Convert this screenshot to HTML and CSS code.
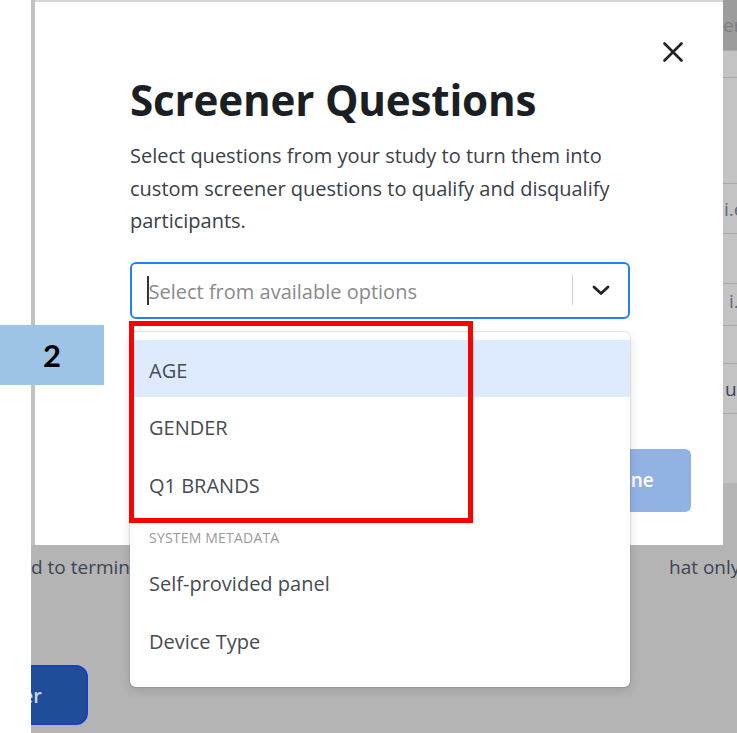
FILE: index.html
```html
<!DOCTYPE html>
<html lang="en">
<head>
<meta charset="utf-8">
<title>Screener Questions</title>
<link rel="stylesheet" href="styles.css">
</head>
<body>
<div class="stage">
  <div class="gutter"></div>
  <div class="shot">
    <div class="top-row">
      <div class="strip"></div>
      <div class="modal">
        <button class="close" aria-label="Close">
          <svg width="20" height="20" viewBox="0 0 20 20"><path d="M1.5 1.5 L18.5 18.5 M18.5 1.5 L1.5 18.5" stroke="#222" stroke-width="2.6" stroke-linecap="round" fill="none"/></svg>
        </button>
        <h1 class="title">Screener Questions</h1>
        <p class="lead">Select questions from your study to turn them into<br>custom screener questions to qualify and disqualify<br>participants.</p>
        <div class="select-wrap">
          <div class="select">
            <span class="caret"></span>
            <span class="placeholder">Select from available options</span>
            <span class="sep"></span>
            <span class="chev">
              <svg width="18" height="11" viewBox="0 0 18 11"><path d="M2 2 L9 8.5 L16 2" stroke="#222" stroke-width="2.8" stroke-linecap="round" stroke-linejoin="round" fill="none"/></svg>
            </span>
          </div>
          <div class="menu">
            <div class="opt active">AGE</div>
            <div class="opt">GENDER</div>
            <div class="opt">Q1 BRANDS</div>
            <div class="group">System metadata</div>
            <div class="opt">Self-provided panel</div>
            <div class="opt">Device Type</div>
          </div>
        </div>
        <div class="footer"><button class="done">Done</button></div>
      </div>
      <div class="table">
        <div class="th">er</div>
        <div class="tr h27"></div>
        <div class="tr h106"></div>
        <div class="tr h50 t-blue">i.e</div>
        <div class="tr h50"></div>
        <div class="tr h42 t-blue up">&nbsp;i.</div>
        <div class="tr h38"></div>
        <div class="tr h50 t-dark">ue</div>
        <div class="tr h70 last"></div>
      </div>
    </div>
    <div class="bg-line"><span class="bg-left">d to terminate</span><span class="bg-right">hat only relevant</span></div>
    <div class="bg-btn-row"><button class="bg-btn">Screener</button></div>
  </div>
  <div class="badge">2</div>
  <div class="highlight"></div>
</div>
</body>
</html>
```
FILE: styles.css
```css
* { box-sizing: border-box; }
html, body { margin: 0; padding: 0; background: #fff; }
body { font-family: "Open Sans", "Noto Sans", sans-serif; }

.stage {
  position: relative;
  width: 737px;
  height: 733px;
  overflow: hidden;
  display: flex;
}
.gutter { width: 31px; flex: none; background: #fff; }

.shot {
  width: 706px;
  height: 733px;
  flex: none;
  background: #b4b4b4;
  overflow: hidden;
  display: flex;
  flex-direction: column;
}

.top-row { display: flex; height: 545px; flex: none; }
.strip { width: 4px; flex: none; background: #c2c2c2; }

/* modal */
.modal {
  position: relative;
  width: 688px;
  height: 545px;
  flex: none;
  background: #fff;
  border-top: 2px solid #d6d6d6;
  padding: 72px 93px 0 95px;
  z-index: 2;
}
.close {
  position: absolute;
  top: 40px;
  right: 40px;
  width: 20px;
  height: 20px;
  padding: 0;
  border: 0;
  background: none;
  display: block;
}
.close svg { display: block; }

.title {
  margin: 0;
  font-size: 42.2px;
  line-height: 52px;
  font-weight: 700;
  color: #1b1f24;
  letter-spacing: -0.2px;
}
.lead {
  margin: 14px 0 0;
  font-size: 20px;
  line-height: 32.5px;
  color: #3b4048;
  white-space: nowrap;
}

.select-wrap { position: relative; margin-top: 24px; width: 500px; }
.select {
  height: 57px;
  border: 2px solid #2280f6;
  border-radius: 6px;
  display: flex;
  align-items: center;
  padding-left: 15px;
}
.caret { width: 1.5px; height: 29px; margin-top: 1px; background: #333; flex: none; }
.placeholder {
  flex: 1;
  font-size: 20px;
  color: #8a8a8a;
  white-space: nowrap;
  margin-top: 3px;
}
.sep { width: 1px; height: 30px; background: #cfcfcf; flex: none; }
.chev {
  width: 55px;
  flex: none;
  display: flex;
  justify-content: center;
  align-items: center;
}
.chev svg { display: block; }

.menu {
  position: absolute;
  left: 0;
  top: calc(100% + 13px);
  width: 500px;
  background: #fff;
  border-radius: 6px;
  box-shadow: 0 0 0 1px rgba(0,0,0,0.09), 0 4px 11px rgba(0,0,0,0.12);
  padding: 8px 0 18px;
  z-index: 5;
}
.opt {
  height: 58px;
  line-height: 54px;
  padding: 4px 19px 0;
  font-size: 20px;
  color: #474b52;
}
.opt.active { background: #deebff; height: 57px; }
.group {
  padding: 17px 19px 8px;
  line-height: 15px;
  font-size: 14px;
  color: #9a9a9a;
  text-transform: uppercase;
  letter-spacing: 0.2px;
}

.footer { display: flex; justify-content: flex-end; margin-top: 130px; margin-right: -61px; }
.done {
  width: 123px;
  height: 63px;
  border: 0;
  border-radius: 6px;
  background: #93b2e4;
  color: #fff;
  font-family: inherit;
  font-size: 19px;
  font-weight: 600;
}

/* page behind (right table) */
.table { width: 14px; flex: none; overflow: hidden; white-space: nowrap; font-size: 19px; }
.th { height: 50px; background: #9c9c9c; color: #7e7e7e; line-height: 50px; padding-left: 0; }
.tr { background: #c3c3c3; border-top: 1px solid #a9a9a9; display: flex; align-items: center; }
.h27 { height: 27px; }
.h106 { height: 106px; }
.h50 { height: 50px; }
.h42 { height: 42px; }
.h38 { height: 38px; }
.h70 { height: 70px; }
.up { padding-bottom: 8px; }
.t-blue { color: #5d6b86; padding-left: 1px; }
.t-dark { color: #3a4658; padding-left: 2px; }

.bg-line {
  display: grid;
  grid-template-columns: 638px auto;
  padding-top: 10px;
  line-height: 24px;
  font-size: 19px;
  color: #3d4553;
  white-space: nowrap;
}
.bg-left, .bg-right { overflow: hidden; }
.bg-btn-row { margin-top: 86px; }
.bg-btn {
  margin-left: -100px;
  width: 157px;
  height: 60px;
  border: 2px solid #1a3fbf;
  border-radius: 12px;
  background: #1f4d97;
  color: #c9d6ea;
  font-family: inherit;
  font-size: 20px;
  font-weight: 600;
  text-align: right;
  padding-right: 44px;
}

/* annotations */
.badge {
  position: absolute;
  left: 0;
  top: 325px;
  width: 104px;
  height: 60px;
  background: #9dc3e6;
  color: #000;
  font-family: "Lato", "Liberation Sans", sans-serif;
  font-weight: 700;
  font-size: 31px;
  display: flex;
  align-items: center;
  justify-content: center;
  z-index: 10;
}
.highlight {
  position: absolute;
  left: 129px;
  top: 321px;
  width: 344px;
  height: 202px;
  border: 5px solid #ff0000;
  z-index: 10;
}
```
